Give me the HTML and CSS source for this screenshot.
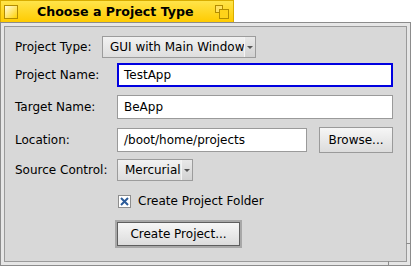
FILE: index.html
```html
<!DOCTYPE html>
<html lang="en">
<head>
  <meta charset="UTF-8" />
  <title>Choose a Project Type</title>
  <link rel="stylesheet" href="styles.css">
</head>
<body>

  <div class="tab">
    <span class="close-box"></span>
    <span class="title">Choose a Project Type</span>
    <svg class="zoom-box" width="14" height="14" viewBox="0 0 14 14">
      <rect x="0.5" y="0.5" width="7" height="7" fill="#ffe060" stroke="#b38c00" />
      <rect x="4.5" y="4.5" width="9" height="9" fill="#ffd21a" stroke="#b38c00" />
    </svg>
  </div>

  <div class="window">
    <div class="panel">

      <div class="row row-type">
        <span class="label short">Project Type:</span>
        <div class="menu-field type-menu">
          <span class="menu-text">GUI with Main Window</span>
          <span class="menu-arrow"></span>
        </div>
      </div>

      <div class="row row-name">
        <span class="label">Project Name:</span>
        <div class="text-field focused">TestApp</div>
      </div>

      <div class="row row-target">
        <span class="label">Target Name:</span>
        <div class="text-field">BeApp</div>
      </div>

      <div class="row row-location">
        <span class="label">Location:</span>
        <div class="text-field location">/boot/home/projects</div>
        <button class="btn browse">Browse...</button>
      </div>

      <div class="row row-scm">
        <span class="label">Source Control:</span>
        <div class="menu-field scm-menu">
          <span class="menu-text">Mercurial</span>
          <span class="menu-arrow"></span>
        </div>
      </div>

      <div class="row row-check">
        <span class="checkbox">
          <svg width="11" height="11" viewBox="0 0 11 11">
            <path d="M2 2 L9 9 M9 2 L2 9" stroke="#2c5c9a" stroke-width="2" />
          </svg>
        </span>
        <span class="check-label">Create Project Folder</span>
      </div>

      <div class="row row-create">
        <div class="default-frame">
          <button class="btn create">Create Project...</button>
        </div>
      </div>

    </div>
    <span class="resize-v"></span>
    <span class="resize-h"></span>
  </div>

</body>
</html>
```

FILE: styles.css
```css
body {
  margin: 0;
  background-color: #fff;
  font-family: "DejaVu Sans", sans-serif;
  font-size: 12px;
  color: #000;
}
.tab {
  box-sizing: border-box;
  width: 234px;
  height: 22px;
  display: flex;
  align-items: center;
  padding-left: 3px;
  border: 1px solid #d9ad00;
  border-bottom: none;
  background: linear-gradient(#ffe44a, #ffcb00);
}
.close-box {
  box-sizing: border-box;
  width: 14px;
  height: 14px;
  border: 1px solid #b38c00;
  background: linear-gradient(135deg, #fffbe0, #ffd200);
}
.title {
  margin-left: 19px;
  font-weight: bold;
  font-size: 12.6px;
}
.zoom-box {
  margin-left: auto;
  margin-right: 4px;
}
.window {
  position: relative;
  box-sizing: border-box;
  width: 411px;
  height: 244px;
  border: 1px solid #8c8c8c;
  padding: 3px;
  background-color: #e6e6e6;
}
.panel {
  box-sizing: border-box;
  height: 100%;
  border: 1px solid #9a9a9a;
  background-color: #d8d8d8;
  padding: 0 13px 0 10px;
  display: flex;
  flex-direction: column;
}
.row {
  display: flex;
  align-items: center;
}
.label {
  width: 102px;
  flex: none;
}
.label.short {
  width: 87px;
}
.row-type { height: 22px; margin-top: 9px; }
.row-name { height: 24px; margin-top: 5px; }
.row-target { height: 24px; margin-top: 8px; }
.row-location { height: 26px; margin-top: 8px; }
.row-scm { height: 22px; margin-top: 6px; }
.row-check { height: 16px; margin-top: 12px; padding-left: 103px; }
.row-create { height: 28px; margin-top: 11px; padding-left: 100px; }

.menu-field {
  box-sizing: border-box;
  height: 22px;
  display: flex;
  border: 1px solid #9c9c9c;
  background: linear-gradient(#f2f2f2, #dedede);
}
.menu-text {
  flex: 1;
  padding-left: 7px;
  line-height: 20px;
  white-space: nowrap;
}
.menu-arrow {
  position: relative;
  width: 10px;
  border-left: 1px solid #f4f4f4;
  background: linear-gradient(#e8e8e8, #d2d2d2);
}
.menu-arrow::after {
  content: "";
  position: absolute;
  left: 2px;
  top: 9px;
  border-left: 3px solid transparent;
  border-right: 3px solid transparent;
  border-top: 3px solid #555;
}
.type-menu { width: 154px; }
.scm-menu { width: 76px; }

.text-field {
  box-sizing: border-box;
  width: 276px;
  height: 24px;
  padding-left: 6px;
  line-height: 22px;
  border: 1px solid #9a9a9a;
  background-color: #fff;
}
.text-field.focused {
  border: 2px solid #0000e0;
  padding-left: 5px;
  line-height: 20px;
}
.text-field.location {
  width: 190px;
}

.btn {
  box-sizing: border-box;
  font-family: "DejaVu Sans", sans-serif;
  font-size: 12px;
  color: #000;
  border: 1px solid #9a9a9a;
  background: linear-gradient(#f6f6f6, #dcdcdc);
  padding: 0;
}
.browse {
  width: 74px;
  height: 26px;
  margin-left: 12px;
}
.default-frame {
  padding: 2px;
  background-color: #a8a8a8;
}
.create {
  display: block;
  width: 123px;
  height: 24px;
  border-color: #5e5e5e;
}

.checkbox {
  box-sizing: border-box;
  width: 13px;
  height: 13px;
  border: 1px solid #8e8e8e;
  background-color: #fff;
  display: flex;
  align-items: center;
  justify-content: center;
}
.check-label {
  margin-left: 7px;
}

.resize-v {
  position: absolute;
  left: 387px;
  bottom: -1px;
  width: 1px;
  height: 5px;
  background-color: #8c8c8c;
}
.resize-h {
  position: absolute;
  right: -1px;
  top: 220px;
  width: 5px;
  height: 1px;
  background-color: #8c8c8c;
}
```
